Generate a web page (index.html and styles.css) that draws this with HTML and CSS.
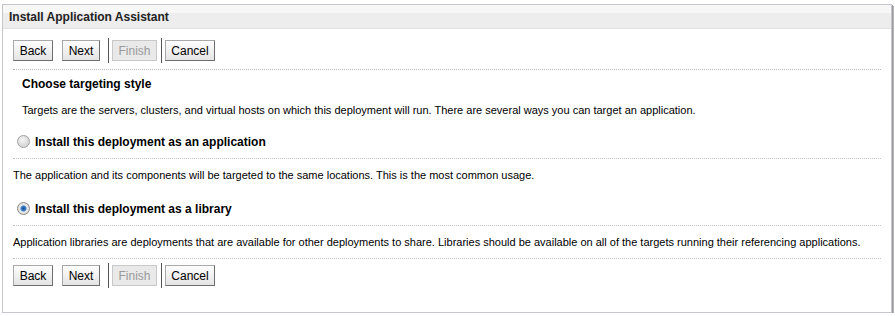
FILE: index.html
```html
<!DOCTYPE html>
<html lang="en">

<head>
    <meta charset="UTF-8">
    <title>Install Application Assistant</title>
    <link rel="stylesheet" href="styles.css">
</head>

<body>

    <div class="panel">
        <div class="panel-head">Install Application Assistant</div>

        <div class="panel-body">
            <div class="toolbar">
                <button class="btn back">Back</button>
                <button class="btn next">Next</button>
                <span class="sep"></span>
                <button class="btn finish" disabled>Finish</button>
                <span class="sep"></span>
                <button class="btn cancel">Cancel</button>
            </div>

            <div class="intro">
                <h2>Choose targeting style</h2>
                <p>Targets are the servers, clusters, and virtual hosts on which this deployment will run. There are several ways you can target an application.</p>
            </div>

            <div class="option">
                <span class="radio"></span>
                <span class="option-label">Install this deployment as an application</span>
            </div>
            <p class="note">The application and its components will be targeted to the same locations. This is the most common usage.</p>

            <div class="option">
                <span class="radio checked"></span>
                <span class="option-label">Install this deployment as a library</span>
            </div>
            <p class="note last">Application libraries are deployments that are available for other deployments to share. Libraries should be available on all of the targets running their referencing applications.</p>

            <div class="toolbar bottom">
                <button class="btn back">Back</button>
                <button class="btn next">Next</button>
                <span class="sep"></span>
                <button class="btn finish" disabled>Finish</button>
                <span class="sep"></span>
                <button class="btn cancel">Cancel</button>
            </div>
        </div>
    </div>

</body>

</html>
```

FILE: styles.css
```css
html {
    font-family: "Liberation Sans", Arial, sans-serif;
    font-size: 11px;
    color: #000;
}

body {
    margin: 0;
    padding: 4px 0 0 2px;
    background: #fff;
}

.panel {
    width: 888px;
    height: 307px;
    border: 1px solid #c4c7cf;
    border-left-color: #c6c6c6;
    box-shadow: 1px 1px 0 #9a9a9a, 2px 2px 0 #b8b8b8;
    background: #fff;
}

.panel-head {
    height: 23px;
    line-height: 24px;
    padding-left: 6px;
    font-weight: bold;
    font-size: 12px;
    color: #222;
    background: linear-gradient(#f7f7f7 0%, #f7f7f7 33%, #ededed 34%, #ededed 100%);
    border-bottom: 1px solid #e0e0e0;
}

.panel-body {
    padding: 0 10px 0 10px;
}

.toolbar {
    display: flex;
    align-items: center;
    height: 37px;
    padding-top: 3px;
    border-bottom: 1px dotted #b8b8b8;
}

.toolbar.bottom {
    border-bottom: none;
    height: 27px;
    padding-top: 3px;
}

.btn {
    font-family: "Liberation Sans", Arial, sans-serif;
    font-size: 12px;
    height: 21px;
    padding: 0;
    margin-left: 3px;
    color: #000;
    background: linear-gradient(#fdfdfd, #e4e4e4);
    border: 1px solid #a8a8a8;
    border-right-color: #6e6e6e;
    border-bottom-color: #6e6e6e;
    border-radius: 0;
}

.back {
    width: 40px;
    margin-left: 0;
}

.next {
    width: 38px;
    margin-left: 9px;
}

.finish {
    width: 45px;
}

.cancel {
    width: 50px;
}

.btn:disabled {
    color: #9a9a9a;
    background: #e9e9e9;
    border-color: #c8c8c8;
}

.sep {
    width: 1px;
    height: 25px;
    background: #555;
    margin-left: 8px;
}

.finish + .sep {
    margin-left: 4px;
}

.intro {
    padding: 0 9px;
}

h2 {
    font-size: 12px;
    font-weight: bold;
    line-height: 14px;
    margin: 0;
    padding-top: 7px;
}

.intro p {
    margin: 0;
    line-height: 13px;
    padding: 13px 0 8px 0;
}

.option {
    display: flex;
    align-items: center;
    gap: 5px;
    height: 33px;
    padding-left: 4px;
    border-bottom: 1px dotted #c4c4c4;
}

.option-label {
    font-weight: bold;
    font-size: 12px;
}

.radio {
    width: 11px;
    height: 11px;
    border-radius: 50%;
    border: 1px solid #a0a0a0;
    background: radial-gradient(circle at 40% 35%, #f6f6f6, #c6c6c6);
}

.radio.checked {
    border-color: #8a8a8a;
    background: radial-gradient(circle at 50% 50%, #1d4f8f 0, #3b7fcf 2.5px, #e8e8e8 3.5px, #d0d0d0 100%);
}

.note {
    margin: 0;
    height: 33px;
    line-height: 33px;
}

.note.last {
    height: 32px;
    line-height: 32px;
    border-bottom: 1px dotted #c4c4c4;
}
```
